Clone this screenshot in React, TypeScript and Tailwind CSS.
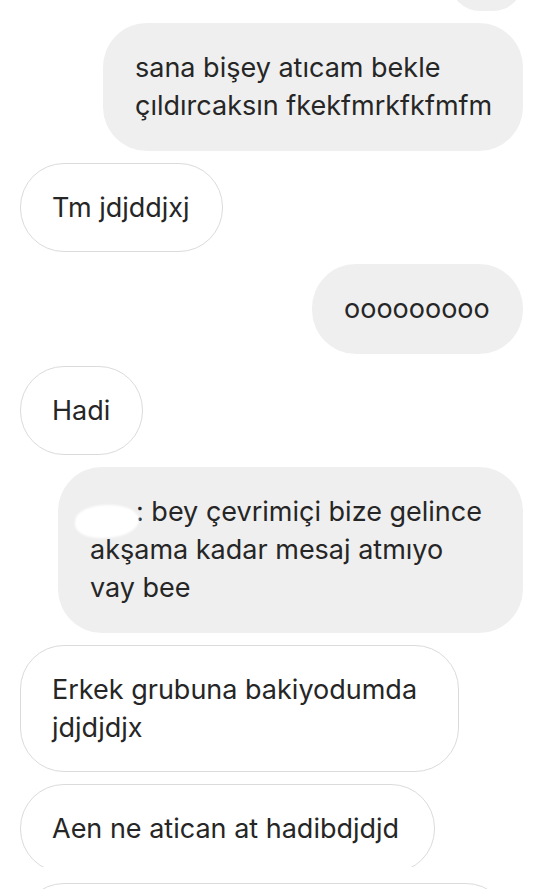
import React from "react";

const font = { fontFamily: "Inter, 'Noto Sans', sans-serif" };

const Mine = ({ children, w }: { children: React.ReactNode; w: string }) => (
  <div
    className={`self-end shrink-0 ${w} bg-[#efefef] rounded-[44px] px-[32px] py-[26px] text-[27px] leading-[38px] text-[#262626] whitespace-nowrap`}
  >
    {children}
  </div>
);

const Theirs = ({ children, w }: { children: React.ReactNode; w: string }) => (
  <div
    className={`self-start shrink-0 ${w} bg-white border-[1.5px] border-[#dbdbdb] rounded-[44px] px-[31px] py-[24.5px] text-[27px] leading-[38px] text-[#262626] whitespace-nowrap`}
  >
    {children}
  </div>
);

export default function App() {
  return (
    <div
      className="w-[540px] h-[889px] overflow-hidden bg-white flex flex-col gap-[12px] pl-[20px] pr-[17px]"
      style={font}
    >
      <div className="self-end shrink-0 w-[73px] h-[60px] -mt-[49px] bg-[#efefef] rounded-[30px]" />

      <Mine w="w-[420px]">
        sana bişey atıcam bekle
        <br />
        çıldırcaksın fkekfmrkfkfmfm
      </Mine>

      <Theirs w="w-[203px]">Tm jdjddjxj</Theirs>

      <Mine w="w-[211px]">ooooooooo</Mine>

      <Theirs w="w-[123px]">Hadi</Theirs>

      <div className="self-end shrink-0 w-[465px] relative bg-[#efefef] rounded-[44px] px-[32px] py-[26px] text-[27px] leading-[38px] text-[#262626] whitespace-nowrap">
        <span className="inline-block w-[46px]" />: bey çevrimiçi bize gelince
        <br />
        akşama kadar mesaj atmıyo
        <br />
        vay bee
        <span className="absolute left-[17px] top-[38px] w-[64px] h-[33px] bg-white rounded-[50%_45%_55%_40%] blur-[1px]" />
      </div>

      <Theirs w="w-[439px]">
        Erkek grubuna bakiyodumda
        <br />
        jdjdjdjx
      </Theirs>

      <div className="self-start h-[83px] overflow-hidden shrink-0">
        <Theirs w="w-[415px]">Aen ne atican at hadibdjdjd</Theirs>
      </div>

      <div className="self-start mt-[4px] w-[490px] h-[90px] shrink-0 border-[1.5px] border-[#dbdbdb] rounded-[44px]" />
    </div>
  );
}
